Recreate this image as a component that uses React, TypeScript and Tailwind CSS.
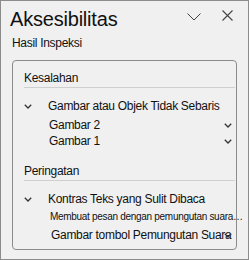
import React from 'react'

const font = { fontFamily: '"Liberation Sans", Arial, sans-serif' }

function Chevron({ className }: { className?: string }) {
  return (
    <svg width="8" height="5" viewBox="0 0 8 5" className={className}>
      <path d="M0.8 0.8 L4 4 L7.2 0.8" fill="none" stroke="#333" strokeWidth="1.3" />
    </svg>
  )
}

export default function App() {
  return (
    <div
      className="w-[249px] h-[260px] bg-[#f0f0f0] border border-[#8c8c8c] text-[#111] relative"
      style={font}
    >
      {/* header */}
      <div className="flex items-start h-[34px]">
        <div className="pl-[9px] pt-[6px] text-[20px] leading-[24px] tracking-[-0.2px]">Aksesibilitas</div>
        <div className="ml-auto flex items-center gap-[21px] pt-[11px] pr-[15px]">
          <svg width="14" height="8" viewBox="0 0 14 8">
            <path d="M0.5 0.5 L7 7 L13.5 0.5" fill="none" stroke="#444" strokeWidth="1" />
          </svg>
          <svg width="11" height="11" viewBox="0 0 11 11" className="-mt-[2px]">
            <path d="M0.5 0.5 L10.5 10.5 M10.5 0.5 L0.5 10.5" fill="none" stroke="#444" strokeWidth="1.1" />
          </svg>
        </div>
      </div>

      <div className="pl-[11px] text-[12px] leading-[16px] tracking-[-0.3px]">Hasil Inspeksi</div>

      {/* results box */}
      <div className="ml-[11px] mt-[9px] w-[225px] h-[190px] border border-[#8c8c8c] rounded-[4px] pl-[11px] pr-[1px] text-[12px] leading-[16px] tracking-[-0.3px]">
        <div className="mt-[9px]">Kesalahan</div>
        <div className="mt-[1px] h-px bg-[#cfcfcf]" />

        <div className="mt-[10px] flex items-center">
          <Chevron className="w-[8px]" />
          <span className="ml-[16px]">Gambar atau Objek Tidak Sebaris</span>
        </div>
        <div className="mt-[3px] relative pl-[25px]">
          Gambar 2
          <Chevron className="absolute right-[3px] top-[6px]" />
        </div>
        <div className="relative pl-[25px]">
          Gambar 1
          <Chevron className="absolute right-[3px] top-[6px]" />
        </div>

        <div className="mt-[14px]">Peringatan</div>
        <div className="mt-[1px] h-px bg-[#cfcfcf]" />

        <div className="mt-[10px] flex items-center">
          <Chevron className="w-[8px]" />
          <span className="ml-[16px]">Kontras Teks yang Sulit Dibaca</span>
        </div>
        <div className="mt-[3px] pl-[26px] text-[10px] leading-[14px] tracking-[-0.3px] whitespace-nowrap">
          Membuat pesan dengan pemungutan suara…
        </div>
        <div className="mt-[3px] relative pl-[27px] whitespace-nowrap">
          Gambar tombol Pemungutan Suara
          <Chevron className="absolute right-[3px] top-[6px]" />
        </div>
      </div>
    </div>
  )
}
